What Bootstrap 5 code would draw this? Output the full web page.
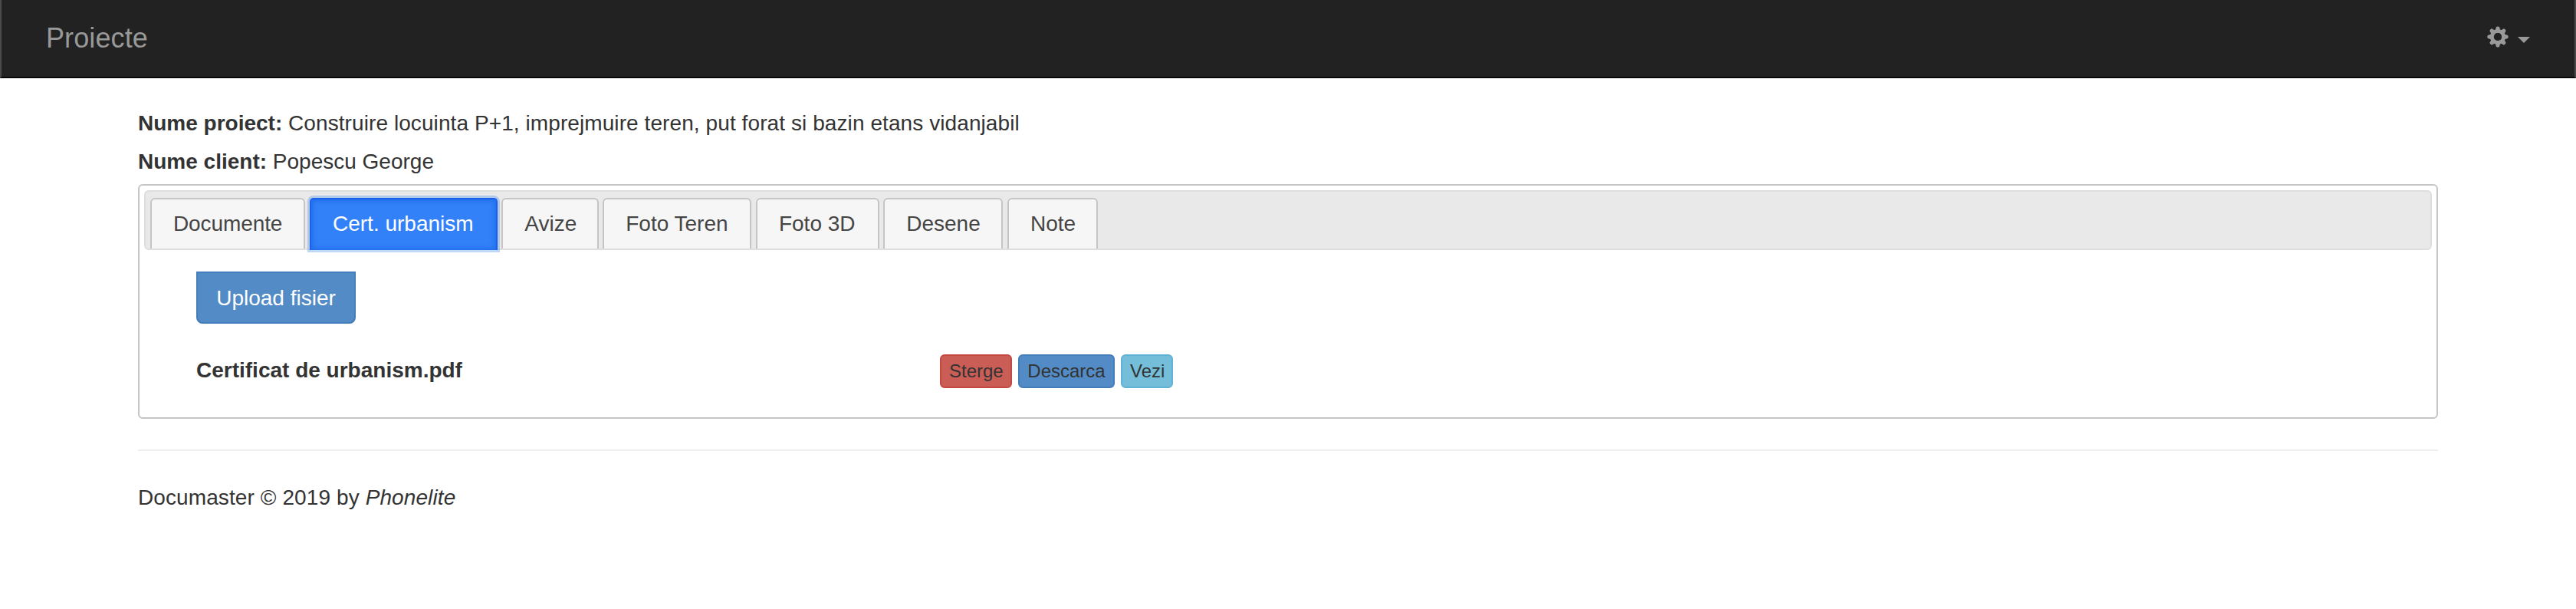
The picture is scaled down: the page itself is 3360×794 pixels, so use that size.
<!DOCTYPE html>
<html lang="ro">
<head>
<meta charset="utf-8">
<meta name="viewport" content="width=device-width, initial-scale=1">
<title>Documaster</title>
<link href="https://cdn.jsdelivr.net/npm/bootstrap@5.3.0/dist/css/bootstrap.min.css" rel="stylesheet">
<style>
body { font: 28px/40px "Liberation Sans", Arial, sans-serif; color: #333; background: #fff; }
.topbar { height: 102px; padding: 0 58px; background: #222; border: 2px solid #4a4a4a; border-top: 0; border-bottom-color: #080808; }
.topbar .navbar-brand { font-size: 36px; line-height: 40px; letter-spacing: .1px; color: #999; padding: 0; margin: 0 0 1px; }
.settings { color: #999; gap: 12px; margin-bottom: 4px; }
.settings svg { display: block; }
.settings .arrow { margin-top: 8px; }
.page { padding: 0 180px; margin-top: 39px; }
.info { margin: 0 0 10px; }
.info + .info { margin-bottom: 9px; }
.info span { letter-spacing: .085px; }
.panel { border: 2px solid #c5c5c5; border-radius: 6px; padding: 6px; height: 306px; }
.tabbar { height: 78px; background: #e9e9e9; border: 2px solid #ddd; border-radius: 6px; padding: 8px 6px 0; gap: 5.6px; }
.tabbar .nav-link { flex: none; height: 66px; padding: 12px 0 0 28px; color: #454545; line-height: 40px; background: #f6f6f6; border: 2px solid #c5c5c5; border-bottom: 0; border-radius: 6px 6px 0 0; white-space: nowrap; }
.tabbar .nav-link:nth-child(1) { width: 202.4px; letter-spacing: -.1px; }
.tabbar .nav-link:nth-child(2) { width: 244.7px; }
.tabbar .nav-link:nth-child(3) { width: 126.4px; }
.tabbar .nav-link:nth-child(4) { width: 194.1px; }
.tabbar .nav-link:nth-child(5) { width: 160.7px; }
.tabbar .nav-link:nth-child(6) { width: 156.1px; }
.tabbar .nav-link:nth-child(7) { width: 117.8px; }
.tabbar .nav-link.active { height: 68px; color: #fff; background: #3281f8; border-color: #1a60ef; box-shadow: inset 0 0 5px 3px #2671ed, 0 0 0 3px rgba(77,139,240,.35); border-radius: 5px 5px 0 0; position: relative; }
.files { padding: 28px 36px 28px 38px; }
.files [class*="col-"] { padding: 0 30px; }
.btn-upload { --bs-btn-color: #fff; --bs-btn-bg: #528bc5; --bs-btn-border-color: #447eba; --bs-btn-border-width: 2px; font-size: 28px; line-height: 40px; padding: 13px 24px 11px; width: 208px; height: 68px; border-radius: 0 0 8px 8px; white-space: nowrap; display: block; }
.file-row { margin-top: 36px; line-height: 50px; }
.actions { margin-top: 4px; }
.act { font-size: 24px; line-height: 36px; height: 44px; padding: 2px 10px; border-width: 2px; border-radius: 6px; color: #333; }
.act-del { width: 94px; background: #ca5d56; border-color: #c34840; }
.act-get { width: 126px; background: #528bc5; border-color: #447eba; }
.act-see { width: 68px; background: #74bed9; border-color: #60b3d6; }
.rule { height: 2px; background: #eee; margin: 40px 0 41px; }
.copy { margin: 0; letter-spacing: .1px; }
</style>
</head>
<body>
<nav class="topbar d-flex align-items-center justify-content-between">
  <a class="navbar-brand" href="#">Proiecte</a>
  <a class="settings d-flex align-items-center text-decoration-none" href="#" aria-label="Setari">
    <svg width="28" height="28" viewBox="-14 -14 28 28"><g fill="#999"><g id="teeth"><path id="tooth" d="M-3.4-8 -2-13.1Q0-14.1 2-13.1L3.4-8Z"/><use href="#tooth" transform="rotate(90)"/><use href="#tooth" transform="rotate(180)"/><use href="#tooth" transform="rotate(270)"/></g><use href="#teeth" transform="rotate(45)"/></g><circle r="7.6" fill="none" stroke="#999" stroke-width="5"/><circle r="5.1" fill="#222"/></svg>
    <svg class="arrow" width="16" height="8" viewBox="0 0 16 8"><path d="M0 0H16L8 8Z" fill="#999"/></svg>
  </a>
</nav>
<main class="page">
  <div>
    <p class="info"><b>Nume proiect:</b> <span>Construire locuinta P+1, imprejmuire teren, put forat si bazin etans vidanjabil</span></p>
    <p class="info"><b>Nume client:</b> Popescu George</p>
  </div>
  <section class="panel">
    <div class="tabbar nav flex-nowrap align-items-start">
      <a class="nav-link" href="#">Documente</a>
      <a class="nav-link active" href="#">Cert. urbanism</a>
      <a class="nav-link" href="#">Avize</a>
      <a class="nav-link" href="#">Foto Teren</a>
      <a class="nav-link" href="#">Foto 3D</a>
      <a class="nav-link" href="#">Desene</a>
      <a class="nav-link" href="#">Note</a>
    </div>
    <div class="files">
      <div class="row g-0"><div class="col-12"><button class="btn btn-upload" type="button">Upload fisier</button></div></div>
      <div class="row g-0 file-row">
        <div class="col-4"><b>Certificat de urbanism.pdf</b></div>
        <div class="col-8 actions d-flex align-items-start gap-2">
          <button class="btn act act-del" type="button">Sterge</button>
          <button class="btn act act-get" type="button">Descarca</button>
          <button class="btn act act-see" type="button">Vezi</button>
        </div>
      </div>
    </div>
  </section>
  <div class="rule"></div>
  <footer><p class="copy">Documaster © 2019 by <em>Phonelite</em></p></footer>
</main>
<script src="https://cdn.jsdelivr.net/npm/bootstrap@5.3.0/dist/js/bootstrap.bundle.min.js"></script>
</body>
</html>
